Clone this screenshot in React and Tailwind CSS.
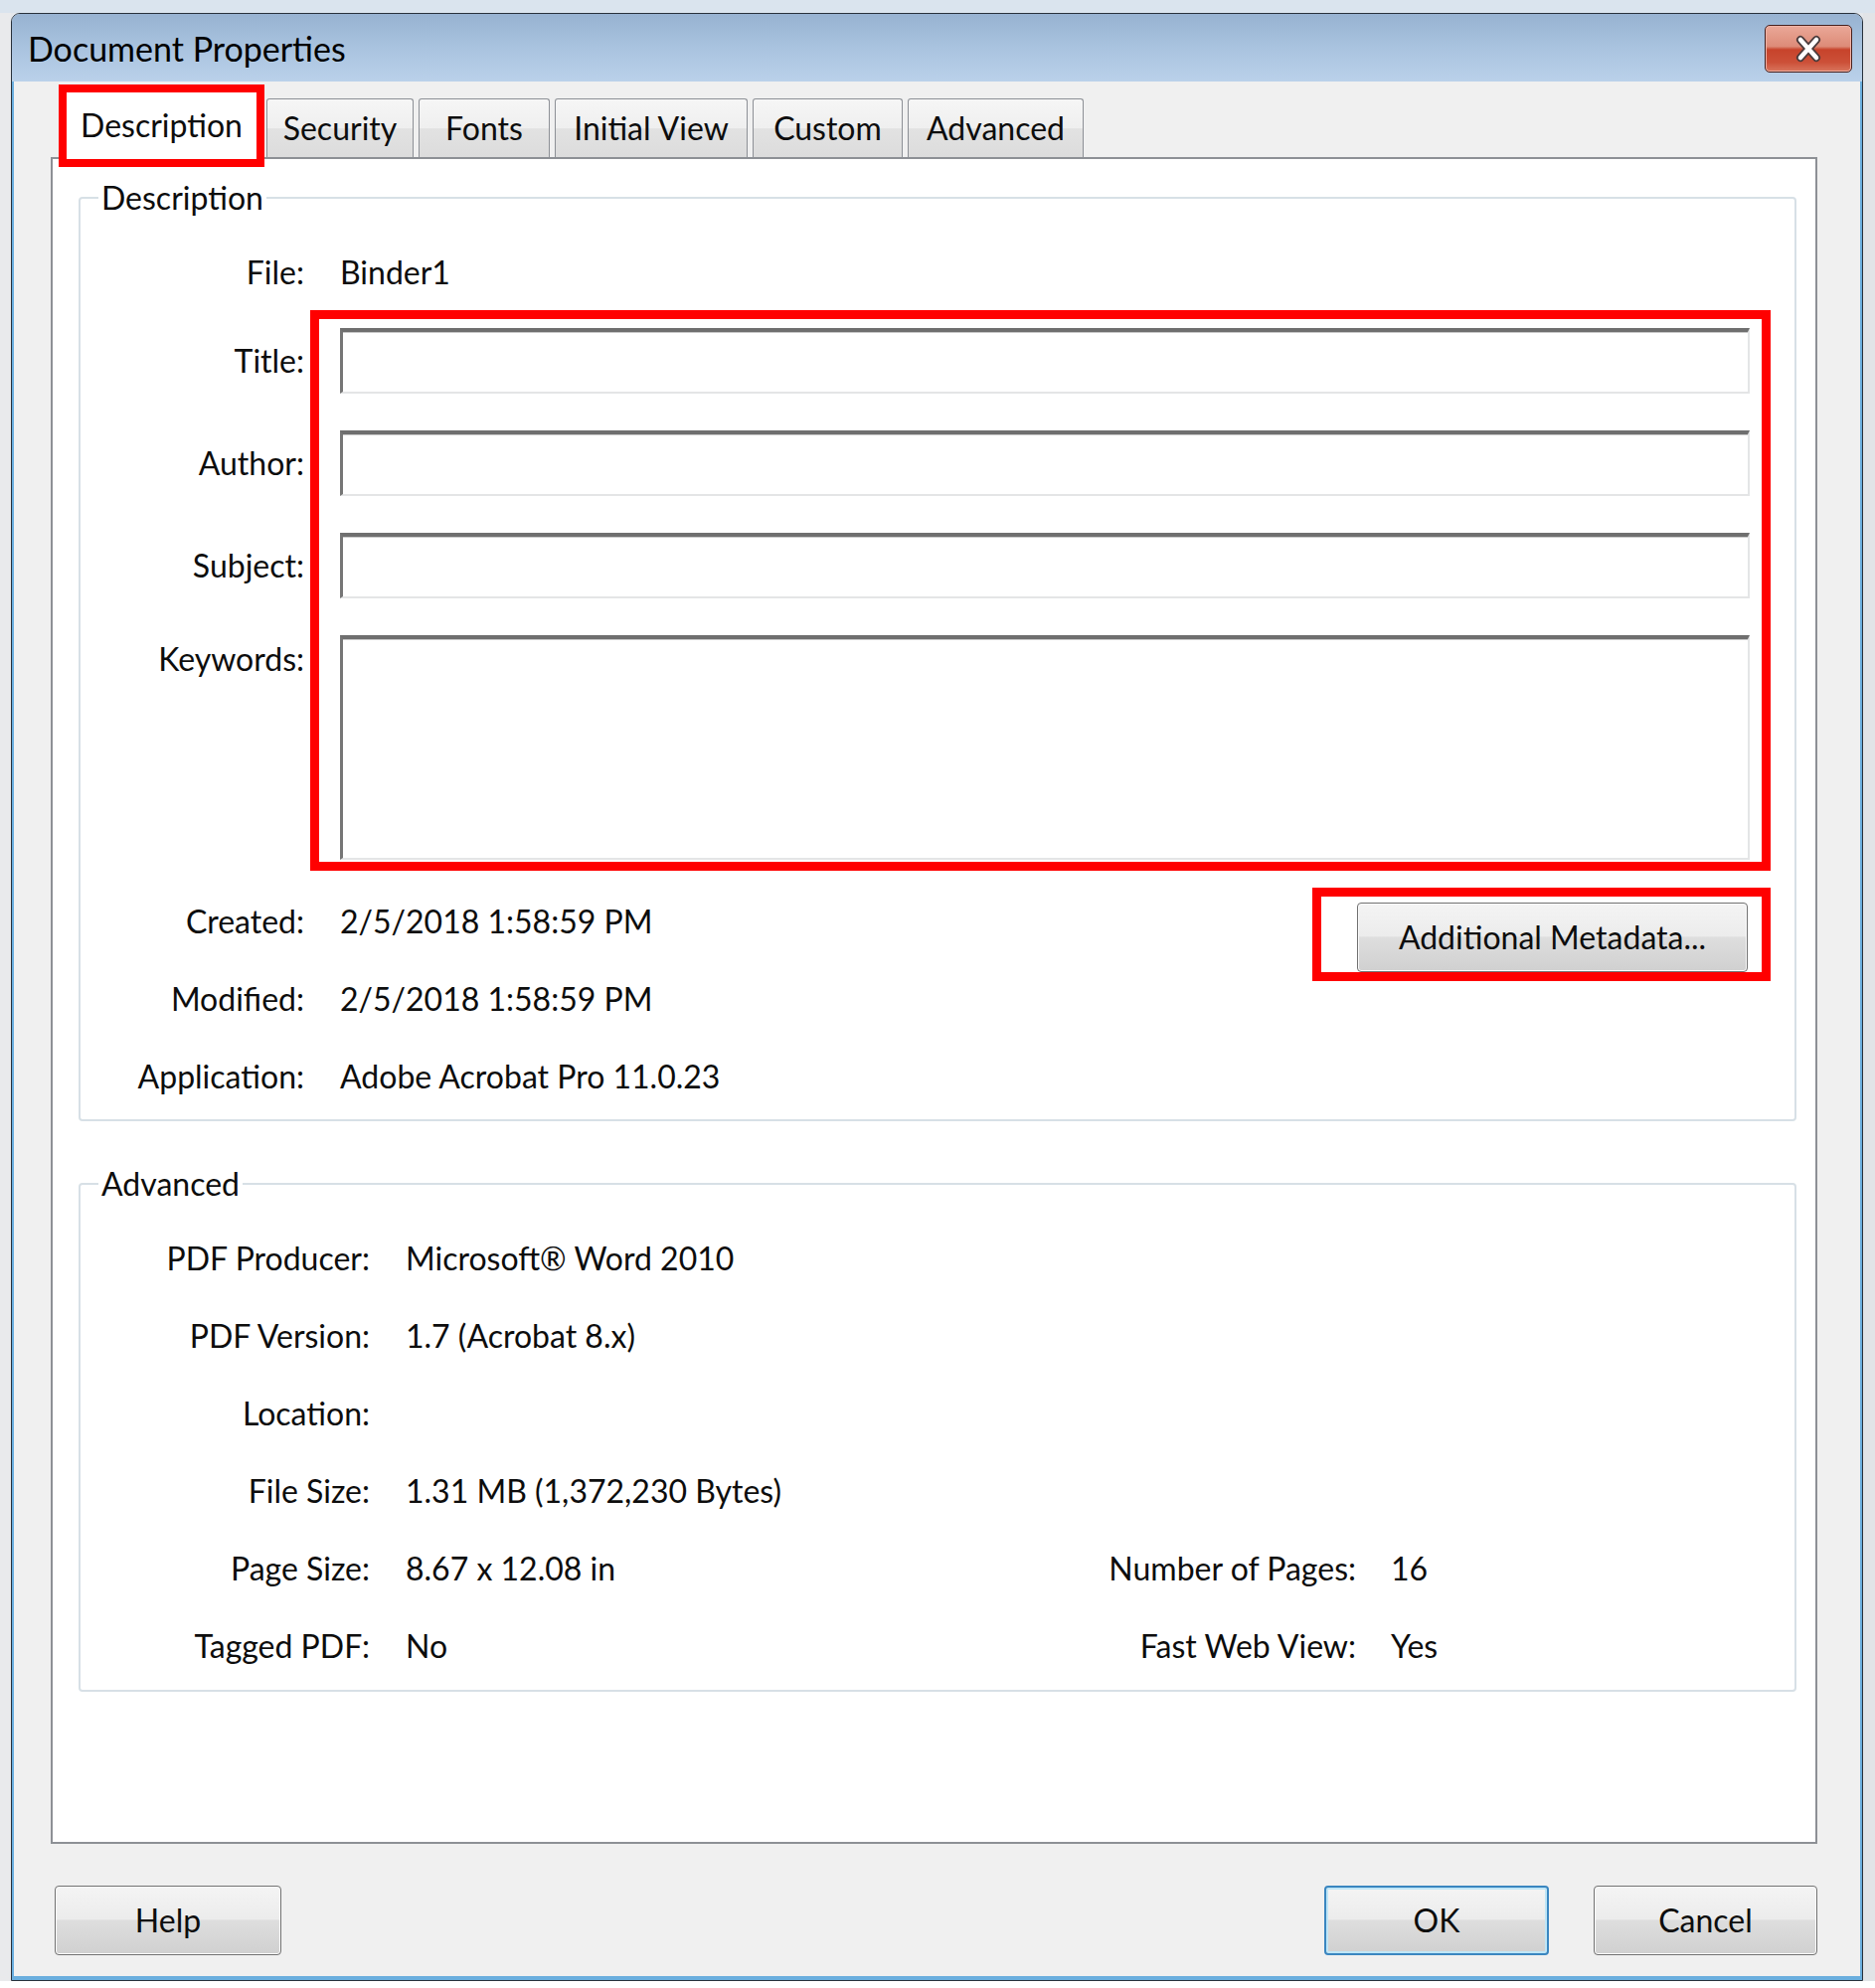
import React from 'react';

const btnBg =
  'bg-[linear-gradient(to_bottom,#f4f4f4_0%,#ececec_48%,#dedede_50%,#d0d0d0_100%)]';

const Tab = ({ label, w }) => (
  <div
    className={`${w} h-[59px] ml-[5px] flex items-center justify-center border border-b-0 border-[#8d9096] rounded-t-[3px] bg-[linear-gradient(to_bottom,#f6f6f6_0%,#efefef_50%,#e2e2e2_51%,#dcdcdc_100%)]`}
  >
    {label}
  </div>
);

const Field = ({ h }) => (
  <div
    className={`${h} w-full bg-white border-t-[4px] border-l-[3px] border-r-2 border-b-2 border-t-[#6f6f6f] border-l-[#767676] border-r-[#e4e5e6] border-b-[#e4e5e6] shadow-[inset_0_1px_0_#c9c9c9]`}
  />
);

const WinButton = ({ children, w, primary }) => (
  <div
    className={`${w} h-[70px] flex items-center justify-center rounded-[4px] ${btnBg} ${
      primary
        ? 'border-2 border-[#3a86c0] shadow-[inset_0_0_0_2px_#bfe6f7]'
        : 'border border-[#717171] shadow-[inset_0_0_0_1px_#fbfbfb]'
    }`}
  >
    {children}
  </div>
);

const InfoRow = ({ label, value, labelW, label2, value2 }) => (
  <div className="h-[78px] flex items-center">
    <div className={`${labelW} text-right shrink-0`}>{label}</div>
    <div className={`ml-[36px] ${label2 ? 'w-[480px] shrink-0' : ''}`}>{value}</div>
    {label2 && (
      <>
        <div className="w-[476px] text-right shrink-0">{label2}</div>
        <div className="ml-[35px]">{value2}</div>
      </>
    )}
  </div>
);

const Legend = ({ children }) => (
  <legend className="ml-[18px] px-[3px] leading-[40px]">{children}</legend>
);

export default function App() {
  return (
    <div className="w-[1886px] h-[2000px] overflow-hidden bg-[#e5e8ec] font-[Lato,sans-serif] text-[32px] text-[#0d0d0d] flex flex-col">
      <div className="h-[13px] bg-[#dae4ee] shrink-0" />
      <div className="flex shrink-0">
        <div className="w-[11px] bg-[#e9eaec] shrink-0" />
        <div className="w-[1863px] h-[1980px] border border-[#28313b] rounded-t-[9px] flex flex-col overflow-hidden shrink-0">
          {/* title bar */}
          <div className="h-[68px] shrink-0 flex items-center justify-between pl-[16px] pr-[10px] bg-[linear-gradient(to_bottom,#97b2d1_0%,#a9c3df_50%,#bad1ea_100%)]">
            <span className="text-[34px] text-black">Document Properties</span>
            <div className="w-[88px] h-[48px] mt-[2px] rounded-[5px] border border-[#47201d] shadow-[inset_0_0_0_1px_#f0b3a6] bg-[linear-gradient(to_bottom,#eaa898_0%,#dd8b78_45%,#c7432b_52%,#cc5038_80%,#d9765e_100%)] flex items-center justify-center">
              <svg width="34" height="28" viewBox="0 0 34 28">
                <path d="M9 5 L25 23 M25 5 L9 23" stroke="#4b3b3b" strokeWidth="8" strokeLinecap="round" fill="none" />
                <path d="M9 5 L25 23 M25 5 L9 23" stroke="#ffffff" strokeWidth="4.5" strokeLinecap="round" fill="none" />
              </svg>
            </div>
          </div>

          {/* body */}
          <div className="flex-1 bg-[#f0f0f0] border-l-2 border-r-2 border-b-[4px] border-[#6aaede] pl-[37px] pr-[43px] flex flex-col">
            {/* tabs */}
            <div className="mt-[3px] h-[73px] flex items-end pl-[8px] shrink-0">
              <div className="relative z-10 w-[207px] h-[83px] mb-[-10px] bg-white border-[8px] border-[#ff0000] flex items-start justify-center pt-[9px]">
                Description
              </div>
              <div className="w-[2px]" />
              <Tab label="Security" w="w-[148px] !ml-0" />
              <Tab label="Fonts" w="w-[132px]" />
              <Tab label="Initial View" w="w-[194px]" />
              <Tab label="Custom" w="w-[151px]" />
              <Tab label="Advanced" w="w-[177px]" />
            </div>

            {/* panel */}
            <div className="h-[1697px] shrink-0 bg-white border-2 border-[#8d9095] pl-[26px] pr-[19px] pt-[19px]">
              <fieldset className="border-2 border-[#d7e0e6] rounded-[4px] pb-[4px]">
                <Legend>Description</Legend>
                <div className="mt-[25px] h-[60px] flex items-center">
                  <div className="w-[225px] text-right">File:</div>
                  <div className="ml-[36px]">Binder1</div>
                </div>

                <div className="mt-[8px] flex">
                  <div className="w-[225px] shrink-0 pt-[18px] flex flex-col gap-[37px] text-right">
                    <div className="h-[66px] flex items-center justify-end">Title:</div>
                    <div className="h-[66px] flex items-center justify-end">Author:</div>
                    <div className="h-[66px] flex items-center justify-end">Subject:</div>
                    <div className="leading-[40px] pt-[4px]">Keywords:</div>
                  </div>
                  <div className="ml-[6px] w-[1469px] border-[9px] border-[#ff0000] pt-[9px] pl-[21px] pr-[12px] pb-[2px] flex flex-col gap-[37px]">
                    <Field h="h-[66px]" />
                    <Field h="h-[66px]" />
                    <Field h="h-[66px]" />
                    <Field h="h-[226px]" />
                  </div>
                </div>

                <div className="mt-[12px] flex justify-between">
                  <div className="flex flex-col">
                    <InfoRow labelW="w-[225px]" label="Created:" value="2/5/2018 1:58:59 PM" />
                    <InfoRow labelW="w-[225px]" label="Modified:" value="2/5/2018 1:58:59 PM" />
                    <InfoRow labelW="w-[225px]" label="Application:" value="Adobe Acrobat Pro 11.0.23" />
                  </div>
                  <div className="self-start mt-[5px] mr-[24px] border-[9px] border-[#ff0000] pt-[6px] pl-[36px] pr-[14px]">
                    <WinButton w="w-[393px]">Additional Metadata...</WinButton>
                  </div>
                </div>
              </fieldset>

              <fieldset className="mt-[43px] border-2 border-[#d7e0e6] rounded-[4px] pb-[5px]">
                <Legend>Advanced</Legend>
                <div className="mt-[16px] flex flex-col">
                  <InfoRow labelW="w-[291px]" label="PDF Producer:" value="Microsoft® Word 2010" />
                  <InfoRow labelW="w-[291px]" label="PDF Version:" value="1.7 (Acrobat 8.x)" />
                  <InfoRow labelW="w-[291px]" label="Location:" value="" />
                  <InfoRow labelW="w-[291px]" label="File Size:" value="1.31 MB (1,372,230 Bytes)" />
                  <InfoRow
                    labelW="w-[291px]"
                    label="Page Size:"
                    value="8.67 x 12.08 in"
                    label2="Number of Pages:"
                    value2="16"
                  />
                  <InfoRow
                    labelW="w-[291px]"
                    label="Tagged PDF:"
                    value="No"
                    label2="Fast Web View:"
                    value2="Yes"
                  />
                </div>
              </fieldset>
            </div>

            {/* footer buttons */}
            <div className="mt-[42px] flex justify-between shrink-0 pl-[4px]">
              <WinButton w="w-[228px]">Help</WinButton>
              <div className="flex gap-[45px]">
                <WinButton w="w-[226px]" primary>
                  OK
                </WinButton>
                <WinButton w="w-[225px]">Cancel</WinButton>
              </div>
            </div>
          </div>
        </div>
        <div className="flex-1 bg-[#e2e4e7]" />
      </div>
      <div className="flex-1 bg-white" />
    </div>
  );
}
